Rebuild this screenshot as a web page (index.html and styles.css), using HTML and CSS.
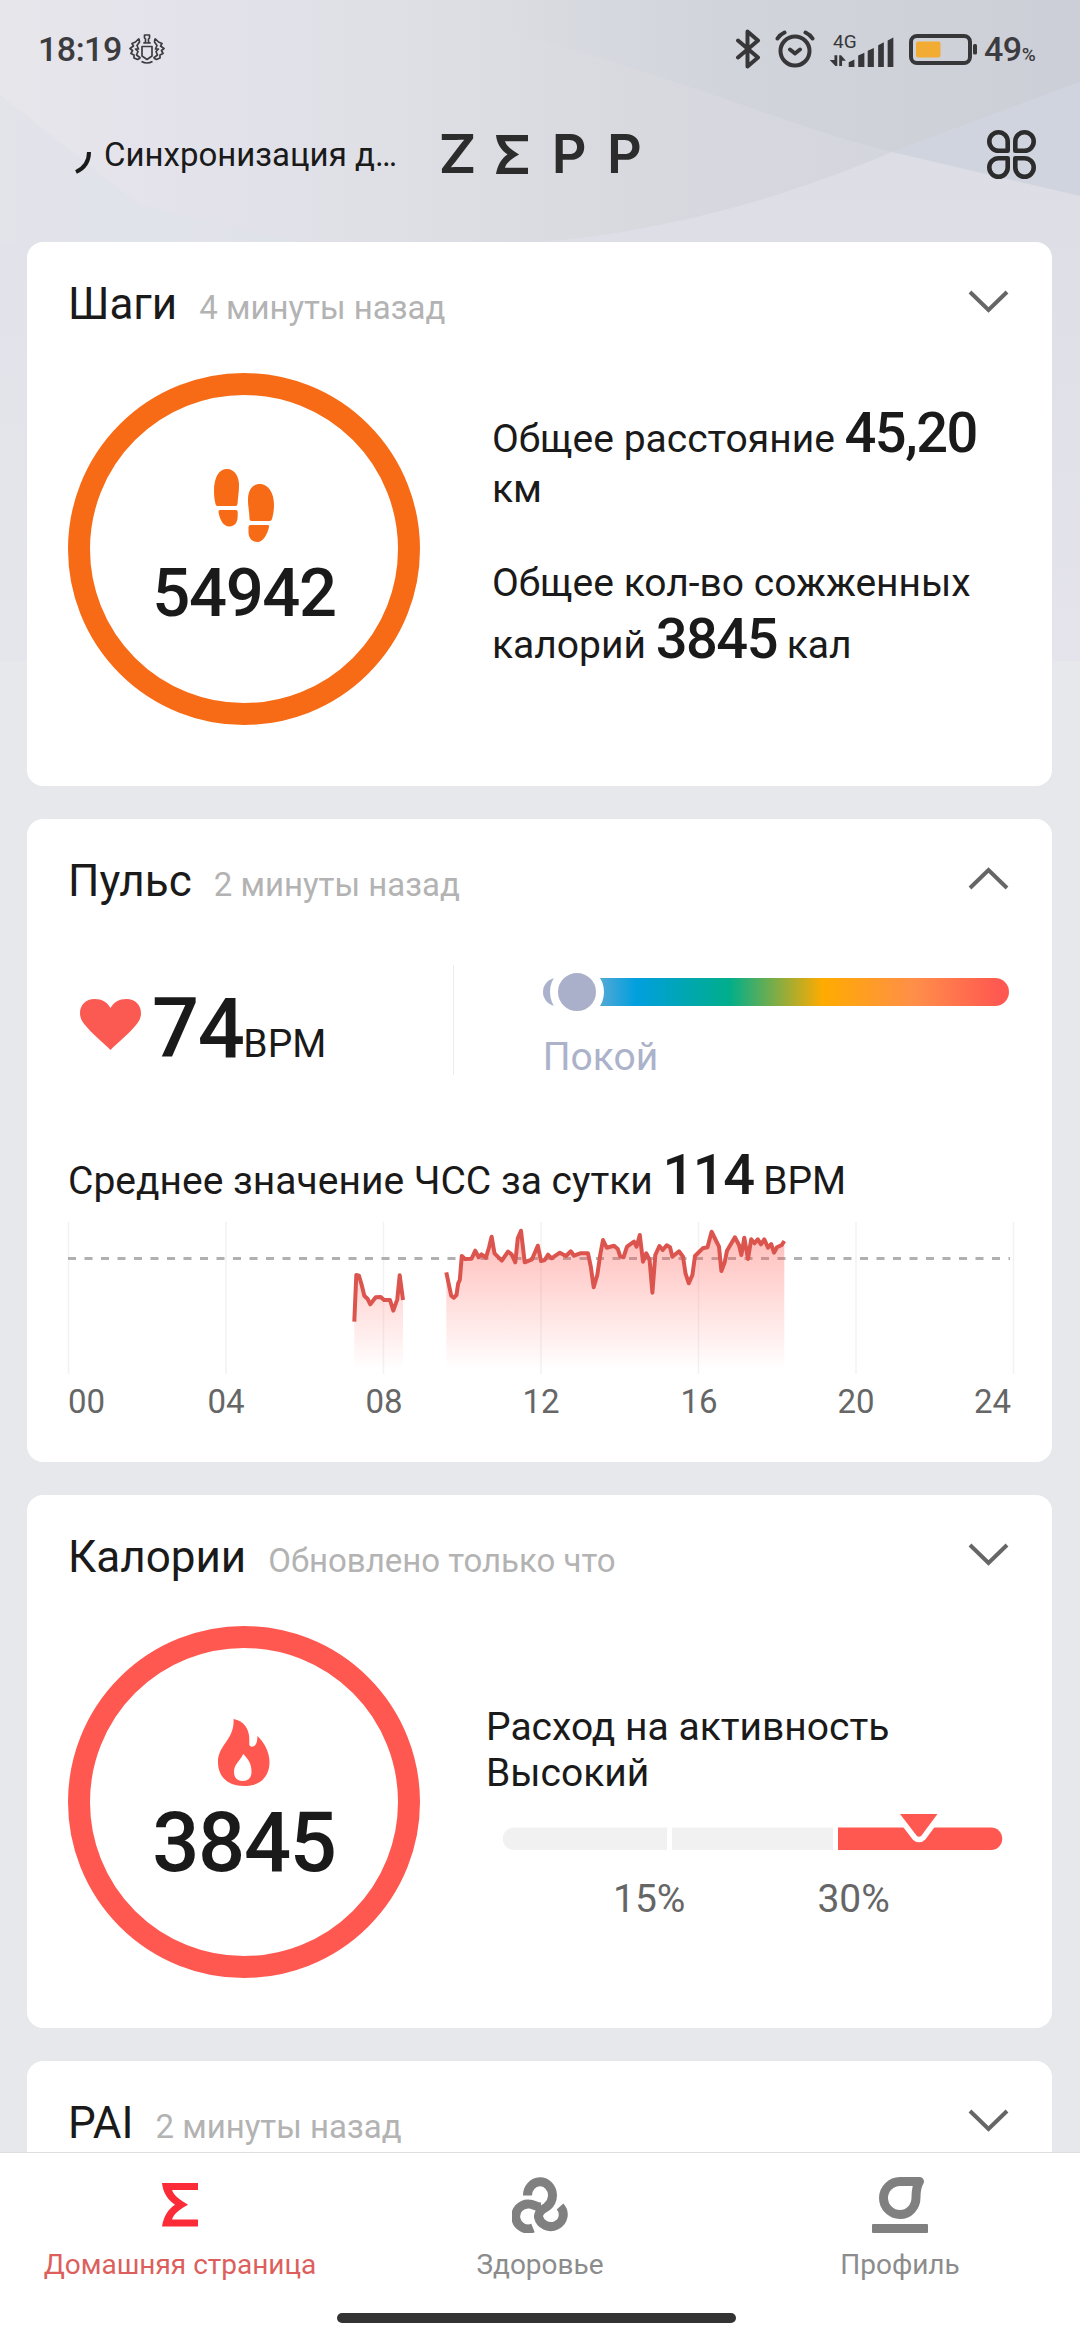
FILE: index.html
```html
<!DOCTYPE html>
<html lang="ru">
<head>
    <meta charset="UTF-8">
    <meta name="viewport" content="width=device-width, initial-scale=1.0">
    <title>Zepp</title>
    <link rel="stylesheet" href="styles.css">
</head>
<body>
    <div class="phone">
        <!-- Background facets -->
        <svg class="backdrop" width="1080" height="661" viewBox="0 0 1080 661" preserveAspectRatio="none">
            <defs>
                <linearGradient id="sky" x1="0" y1="0" x2="1" y2="0">
                    <stop offset="0" stop-color="#e7e6ea"/>
                    <stop offset="0.15" stop-color="#e4e3ec"/>
                    <stop offset="0.35" stop-color="#dfdfe6"/>
                    <stop offset="0.6" stop-color="#d8d9df"/>
                    <stop offset="1" stop-color="#d1d3dd"/>
                </linearGradient>
                <linearGradient id="hill" x1="0" y1="0" x2="0" y2="1">
                    <stop offset="0" stop-color="#dcdde5"/>
                    <stop offset="1" stop-color="#e5e4ec"/>
                </linearGradient>
                <linearGradient id="left" x1="0" y1="0" x2="0" y2="1">
                    <stop offset="0" stop-color="#e2e2ea"/>
                    <stop offset="1" stop-color="#e5e6eb"/>
                </linearGradient>
                <linearGradient id="edge" x1="0" y1="0" x2="1" y2="0">
                    <stop offset="0" stop-color="#d3d8df" stop-opacity="0"/>
                    <stop offset="0.4" stop-color="#d1d4da"/>
                    <stop offset="1" stop-color="#cdcfd8"/>
                </linearGradient>
            </defs>
            <rect width="1080" height="661" fill="url(#sky)"/>
            <path d="M0 95L140 205L300 242H0Z" fill="#e0e3e9" opacity="0.7"/>
            <path d="M500 0H1080V82L892 152C800 130 660 70 500 30Z" fill="url(#edge)"/>
            <path d="M1080 82L892 152L1080 196Z" fill="#d0d4de"/>
            <path d="M1080 196L892 152C780 200 660 232 540 242V661H1080Z" fill="url(#hill)"/>
            <path d="M0 242H540V661H0Z" fill="url(#left)"/>
        </svg>

        <div class="status-bar">
            <span class="clock">18:19</span>
            <svg class="emblem" width="36" height="30" viewBox="0 0 36 30" fill="none" stroke="#3c3c40" stroke-width="1.7" stroke-linejoin="round">
                <path d="M15.500 1H20.500V4L19.500 5V8L21 9H15L16.500 8V5L15.500 4Z"/>
                <path d="M13 12.500H23V22L18 25.500L13 22Z"/>
                <path d="M12.500 27.500Q18 30.500 23.500 27.500"/>
                <path d="M10 4.500L6.500 8L3 9.500L4.500 12L1 14.500L3.500 16.500L2 19.500L5 21V24L8.500 25.500L11.500 24M10 4.500L10.500 8L8 11.500L9.500 15H6.500L9 17.500L7.500 21L11.500 24"/>
                <path d="M26 4.500L29.500 8L33 9.500L31.500 12L35 14.500L32.500 16.500L34 19.500L31 21V24L27.500 25.500L24.500 24M26 4.500L25.500 8L28 11.500L26.500 15H29.500L27 17.500L28.500 21L24.500 24"/>
            </svg>
            <svg class="bluetooth" width="26" height="40" viewBox="0 0 26 40" fill="none" stroke="#37373a" stroke-width="4" stroke-linecap="round" stroke-linejoin="round">
                <path d="M3 11.500L23 28.500L12.500 37.500V2.500L23 11.500L3 28.500"/>
            </svg>
            <svg class="alarm" width="40" height="38" viewBox="0 0 40 38" fill="none" stroke="#37373a" stroke-width="4" stroke-linecap="round" stroke-linejoin="round">
                <circle cx="20" cy="21" r="14.500"/>
                <path d="M15 19.500L20 23.500L25 19.500M2.500 8.500Q5 4.500 9.500 2.500M37.500 8.500Q35 4.500 30.500 2.500"/>
            </svg>
            <svg class="signal" width="68" height="40" viewBox="0 -4 68 40" fill="#37373a">
                <text x="3.500" y="15.500" class="net">4G</text>
                <path d="M5 23.500H8V35H6L0 28.500H5ZM10 35V23.500H12L17 29.500H13V35Z"/>
                <path d="M20 36V31L26 28V36ZM30 36V24L36.500 21V36ZM40 36V19L46.500 16V36ZM51 36V13L57 10V36ZM61 36V8L67 5V36Z"/>
            </svg>
            <svg class="battery" width="69" height="31" viewBox="0 0 69 31">
                <rect x="2" y="2" width="59" height="27" rx="6" fill="none" stroke="#37373a" stroke-width="4"/>
                <rect x="7" y="7.500" width="24.500" height="16" rx="2" fill="#f2ac33"/>
                <rect x="64" y="10" width="4" height="10.500" rx="1.500" fill="#37373a"/>
            </svg>
            <span class="percent">49<small>%</small></span>
        </div>

        <header class="app-bar">
            <div class="sync">
                <svg width="17" height="22" viewBox="0 0 17 22" fill="none" stroke="#1a1a1a" stroke-width="4">
                    <path d="M14 0Q14 14 1 20"/>
                </svg>
                <span>Синхронизация д…</span>
            </div>
            <div class="logo">
                <span class="z">Z</span>
                <svg width="32" height="39" viewBox="0 0 36 43.500" preserveAspectRatio="none" fill="#2c2c2c">
                    <path d="M0 0H36V7H10C12 13 19 17.500 26 21.700C19 25.500 12 30 10 36.500H36V43.500H0C1.500 34 6 26 13 21.700C6 17 1 10 0 0Z"/>
                </svg>
                <span>P</span>
                <span>P</span>
            </div>
            <svg class="menu-icon" width="49" height="49" viewBox="0 0 49 49" fill="none" stroke="#2c2c2c" stroke-width="4.600" stroke-linejoin="round">
                <path d="M20.700 20.700H11.500A9.200 9.200 0 1 1 20.700 11.500Z"/>
                <path d="M28.300 20.700V11.500A9.200 9.200 0 1 1 37.500 20.700Z"/>
                <path d="M20.700 28.300V37.500A9.200 9.200 0 1 1 11.500 28.300Z"/>
                <path d="M28.300 28.300H37.500A9.200 9.200 0 1 1 28.300 37.500Z"/>
            </svg>
        </header>

        <main class="cards">
            <section class="card steps">
                <div class="card-head">
                    <h2>Шаги</h2>
                    <span class="ago">4 минуты назад</span>
                    <svg class="chevron" width="41" height="23" viewBox="0 0 41 23"><path d="M2 2L20.500 20L39 2"/></svg>
                </div>
                <div class="card-body">
                    <div class="ring ring-steps">
                        <svg width="60" height="73" viewBox="0 0 60 73" fill="#f76b16">
                            <path d="M13 0C21 0 25 8 25 16C25 23 24 28 23.500 35Q23.300 37 21.500 37H3.500Q1.800 37 1.500 35C.5 31 0 27 0 22C0 8 5 0 13 0Z"/>
                            <path d="M6 41H22Q23.700 41 23.700 43V47C23.700 54 20 57.500 15.500 57.500C9 57.500 6 51 4.500 43Q4.300 41 6 41Z"/>
                            <path d="M45.500 15C54 15 60 23 60 36C60 42 59 46 58 50Q57.500 52 55.500 52H37.500Q35.500 52 35.500 50C35.500 43 34 38 34 31C34 22 38 15 45.500 15Z"/>
                            <path d="M36.500 56H53.500Q55.500 56 55 58C53 66 49 73 43.500 73C38 73 34.500 69 34.500 63V58Q34.500 56 36.500 56Z"/>
                        </svg>
                        <span>54942</span>
                    </div>
                    <div class="totals">
                        <p>Общее расстояние <b>45,20</b> км</p>
                        <p>Общее кол-во сожженных калорий <b>3845</b> кал</p>
                    </div>
                </div>
            </section>

            <section class="card pulse">
                <div class="card-head">
                    <h2>Пульс</h2>
                    <span class="ago">2 минуты назад</span>
                    <svg class="chevron" width="41" height="23" viewBox="0 0 41 23"><path d="M2 21L20.500 3L39 21"/></svg>
                </div>
                <div class="pulse-row">
                    <div class="bpm">
                        <svg width="61" height="51" viewBox="0 0 61 51" fill="#fb5a52">
                            <path d="M30.500 51C24 44 12 35 5 26C1 21 0 18 0 14C0 6 6 0 14.500 0C22 0 27 3 30.500 9C34 3 39 0 46.500 0C55 0 61 6 61 14C61 18 60 21 56 26C49 35 37 44 30.500 51Z"/>
                        </svg>
                        <b>74</b><span>BPM</span>
                    </div>
                    <div class="zone">
                        <div class="zone-bar"><i class="knob"></i></div>
                        <span>Покой</span>
                    </div>
                </div>
                <p class="average">Среднее значение ЧСС за сутки <b>114</b> BPM</p>
                <svg class="chart" width="948" height="200" viewBox="0 0 948 200">
                    <defs>
                        <linearGradient id="area" gradientUnits="userSpaceOnUse" x1="0" y1="10" x2="0" y2="148">
                            <stop offset="0" stop-color="#ff5850" stop-opacity="0.4"/>
                            <stop offset="1" stop-color="#ff5850" stop-opacity="0"/>
                        </linearGradient>
                    </defs>
                    <path class="grid" d="M.5 0V152M158 0V152M315.500 0V152M473 0V152M630.500 0V152M788 0V152M945.500 0V152"/>
                    <path class="dash" d="M0 36.500H942"/>
                    <g fill="url(#area)">
                        <path d="M286.300 152V99.700L288.300 53L291 53.700L293.700 63L296.300 73.700L299.700 77L302.300 82.300L307.700 75.300L312.700 75L316 78H322L325.300 88.700L329.300 77.300L331.700 53.300L335 78V152Z"/>
                        <path d="M378.300 152V50.300L383.200 73.700L385.700 75.700L388.500 73L390.200 61.300L391.800 58L393.800 34L397 37L403.600 36.700L407.300 28.700L410.600 35.300L413.400 32.300L417.900 35.700L421.200 24.700L423.600 14.700L426.500 31.300L433.800 38.700L440 29.700L443.600 32.300L447.300 40.300L449.800 16.300L453 8.700L456.700 40.300L464 37.300L469.800 23.700L473 39L476.700 38L480 32.700L483.600 36.300L491.800 30.700L497.900 34L502.800 29.300L506 33.700L512.200 31.300H520L522.800 44.700L525.700 65.300L529.300 53L532.200 33L535 18L538.700 25.700L546 23.700L549.800 27L552.200 34.300L555.500 35.300L559 24.700L566 19.700L568.500 24.700L571.800 13L575 39.700L578.300 31.300L581.600 38L584.400 70.700L587.300 33L591.400 24L594.700 28L598.700 23.300L602 25.300L604.400 34.700L611 29.300L615 34.700L617.500 51.300L620.800 61.300L624.400 53L627 34L634.700 26.300L639.500 25.300L643.600 9.700L647.700 18L651 24.700L653.400 49L656.700 40.300L659 28.700L666.900 15.300L671 23L673.400 33L676.300 15.700L680 37L683.200 17.300L686.500 21.300L689.800 17.300L693 22.300L696.300 17.300L700 25.700L703.200 22L706 30.700L709 25.300L713.800 23L716.300 19V152Z"/>
                    </g>
                    <path class="line" d="M286.300 99.700L288.300 53L291 53.700L293.700 63L296.300 73.700L299.700 77L302.300 82.300L307.700 75.300L312.700 75L316 78H322L325.300 88.700L329.300 77.300L331.700 53.300L335 78"/>
                    <path class="line" d="M378.300 50.300L383.200 73.700L385.700 75.700L388.500 73L390.200 61.300L391.800 58L393.800 34L397 37L403.600 36.700L407.300 28.700L410.600 35.300L413.400 32.300L417.900 35.700L421.200 24.700L423.600 14.700L426.500 31.300L433.800 38.700L440 29.700L443.600 32.300L447.300 40.300L449.800 16.300L453 8.700L456.700 40.300L464 37.300L469.800 23.700L473 39L476.700 38L480 32.700L483.600 36.300L491.800 30.700L497.900 34L502.800 29.300L506 33.700L512.200 31.300H520L522.800 44.700L525.700 65.300L529.300 53L532.200 33L535 18L538.700 25.700L546 23.700L549.800 27L552.200 34.300L555.500 35.300L559 24.700L566 19.700L568.500 24.700L571.800 13L575 39.700L578.300 31.300L581.600 38L584.400 70.700L587.300 33L591.400 24L594.700 28L598.700 23.300L602 25.300L604.400 34.700L611 29.300L615 34.700L617.500 51.300L620.800 61.300L624.400 53L627 34L634.700 26.300L639.500 25.300L643.600 9.700L647.700 18L651 24.700L653.400 49L656.700 40.300L659 28.700L666.900 15.300L671 23L673.400 33L676.300 15.700L680 37L683.200 17.300L686.500 21.300L689.800 17.300L693 22.300L696.300 17.300L700 25.700L703.200 22L706 30.700L709 25.300L713.800 23L716.300 19"/>
                    <g class="hours">
                        <text class="first" x="0" y="191">00</text>
                        <text x="158" y="191">04</text>
                        <text x="316" y="191">08</text>
                        <text x="473" y="191">12</text>
                        <text x="631" y="191">16</text>
                        <text x="788" y="191">20</text>
                        <text class="last" x="943" y="191">24</text>
                    </g>
                </svg>
            </section>

            <section class="card calories">
                <div class="card-head">
                    <h2>Калории</h2>
                    <span class="ago">Обновлено только что</span>
                    <svg class="chevron" width="41" height="23" viewBox="0 0 41 23"><path d="M2 2L20.500 20L39 2"/></svg>
                </div>
                <div class="card-body">
                    <div class="ring ring-calories">
                        <svg width="52" height="67" viewBox="0 0 52 67" fill="#ff5850" fill-rule="evenodd">
                            <path d="M15.500 0C26 2 31.300 10 31.300 20V25.500C32 28.500 36 28.500 38 25C39.500 22.500 39 20 39.500 17C46 23 51.500 33 51.500 43C51.500 58 42 67 26 67C10 67 0 58 0 43C0 26 17 20 15.500 0ZM25.200 35C22 42 16 45 16 53C16 59 19.500 62 24.800 62C30 62 33.500 59 33.500 53C33.500 44 30 40 25.200 35Z"/>
                        </svg>
                        <span>3845</span>
                    </div>
                    <div class="activity">
                        <p>Расход на активность<br>Высокий</p>
                        <svg width="499" height="36" viewBox="0 0 499 36">
                            <path d="M11 13.500H164V36H11A11 11 0 0 1 11 13.500ZM169 13.500H330V36H169Z" fill="#f1f1f1"/>
                            <path d="M335 13.500H488A11 11 0 0 1 488 36H335Z" fill="#ff5850"/>
                            <path d="M397 0H434.500L418.500 21.500Q416 24 413.500 21.500Z" fill="#ff5850" stroke="#fff" stroke-width="11" stroke-linejoin="round" paint-order="stroke"/>
                        </svg>
                        <div class="marks"><span>15%</span><span>30%</span></div>
                    </div>
                </div>
            </section>

            <section class="card pai">
                <div class="card-head">
                    <h2>PAI</h2>
                    <span class="ago">2 минуты назад</span>
                    <svg class="chevron" width="41" height="23" viewBox="0 0 41 23"><path d="M2 2L20.500 20L39 2"/></svg>
                </div>
            </section>
        </main>

        <nav class="tabs">
            <a class="tab active">
                <svg width="56" height="56" viewBox="0 0 56 56" fill="#fb2c37">
                    <path transform="translate(10 6)" d="M0 0H36V7H10C12 13 19 17.500 26 21.700C19 25.500 12 30 10 36.500H36V43.500H0C1.500 34 6 26 13 21.700C6 17 1 10 0 0Z"/>
                </svg>
                <span>Домашняя страница</span>
            </a>
            <a class="tab">
                <svg width="56" height="56" viewBox="0 0 56 56" fill="none" stroke="#808080" stroke-width="9">
                    <path d="M15.500 18.500A12.500 13.500 0 0 1 40.500 18C40.500 23 38.500 27 34.500 30C29.500 33 26.500 35 26.500 40A12.500 12 0 1 0 48 29.500"/>
                    <path d="M21 51A12.500 12.500 0 1 1 17 27C22 27 23 30 29 30"/>
                </svg>
                <span>Здоровье</span>
            </a>
            <a class="tab">
                <svg width="56" height="56" viewBox="0 0 56 56">
                    <path d="M28 4.500H47.500C44.500 9 44 14 44 20.500C44 30 37 37.500 28 37.500S11.500 30 11.500 21S19 4.500 28 4.500Z" fill="none" stroke="#808080" stroke-width="9" stroke-linejoin="round"/>
                    <rect y="47" width="56" height="9" rx="1" fill="#808080"/>
                </svg>
                <span>Профиль</span>
            </a>
            <div class="home-bar"></div>
        </nav>
    </div>
</body>
</html>
```
FILE: styles.css
```css
* {
    box-sizing: border-box;
}

body {
    margin: 0;
    font-family: Roboto, 'Noto Sans', sans-serif;
    color: #1a1a1a;
    background: #e7e8ec;
}

svg {
    display: block;
    flex: none;
}

h2, p {
    margin: 0;
    font-weight: 400;
}

b {
    font-weight: 500;
}

.phone {
    position: relative;
    display: flex;
    flex-direction: column;
    width: 1080px;
    height: 2340px;
    overflow: hidden;
}

.backdrop {
    position: absolute;
    top: 0;
    left: 0;
    z-index: -1;
}

/* Status bar */
.status-bar {
    display: flex;
    align-items: center;
    height: 98px;
    padding: 0 41px 0 38px;
    color: #3c3c40;
}

.clock {
    width: 91px;
    font-size: 34px;
    font-weight: 500;
    letter-spacing: -0.5px;
}

.emblem {
    margin-right: auto;
}

.alarm {
    margin-left: 14px;
}

.signal {
    margin: 0 13px;
    padding-bottom: 2px;
    overflow: visible;
}

.net {
    font-size: 20px;
}

.percent {
    width: 55px;
    margin-left: 6px;
    font-size: 34px;
    font-weight: 500;
    letter-spacing: -0.5px;
    white-space: nowrap;
}

.percent small {
    font-size: 19px;
}

/* App bar */
.app-bar {
    display: flex;
    align-items: center;
    height: 112px;
    margin-bottom: 32px;
    padding: 0 44px 0 75px;
}

.sync {
    display: flex;
    align-items: center;
    gap: 12px;
    width: 366px;
    font-size: 33px;
}

.sync svg {
    margin-top: 18px;
}

.logo {
    display: flex;
    align-items: center;
    justify-content: space-between;
    width: 198px;
}

.logo span {
    width: 32px;
    font-family: Inter, sans-serif;
    font-size: 54px;
    font-weight: 600;
    line-height: 54px;
    color: #2c2c2c;
}

.logo .z {
    transform: scaleX(1.08);
    transform-origin: right;
}

.menu-icon {
    margin-left: auto;
}

/* Cards */
.cards {
    display: flex;
    flex: 1;
    flex-direction: column;
    gap: 33px;
    min-height: 0;
    padding: 0 28px 0 27px;
    overflow: hidden;
}

.card {
    flex: none;
    padding: 36px 43px 0 41px;
    background: #fff;
    border-radius: 16px;
}

.steps {
    height: 544px;
}

.pulse {
    height: 643px;
}

.calories {
    height: 533px;
}

.pai {
    height: 300px;
}

.card-head {
    display: flex;
    align-items: baseline;
    height: 52px;
}

.card-head h2 {
    font-size: 44px;
}

.ago {
    margin-left: 22px;
    font-size: 33px;
    color: #b3b3b3;
}

.chevron {
    align-self: flex-start;
    margin: 12px 0 0 auto;
    fill: none;
    stroke: #666;
    stroke-width: 4;
}

.card-body {
    display: flex;
    margin-top: 43px;
}

.ring {
    display: flex;
    flex: none;
    flex-direction: column;
    align-items: center;
    width: 352px;
    height: 352px;
    border: 22px solid;
    border-radius: 50%;
}

.ring span {
    color: #1a1a1a;
    font-weight: 500;
}

.ring-steps {
    padding-top: 74px;
    border-color: #f76b16;
}

.ring-steps span {
    margin-top: 12px;
    font-size: 67px;
    letter-spacing: -1.4px;
}

.ring-calories {
    padding-top: 71px;
    border-color: #ff5850;
}

.ring-calories span {
    margin-top: 8px;
    font-size: 83px;
    letter-spacing: -1.3px;
}

.totals {
    width: 510px;
    margin: 27px 0 0 72px;
    font-size: 39px;
}

.totals p + p {
    margin-top: 48px;
}

.totals b, .average b {
    font-size: 56px;
    letter-spacing: -1.5px;
}

/* Pulse card */
.pulse-row {
    display: flex;
    height: 110px;
    margin-top: 58px;
}

.bpm {
    display: flex;
    align-items: baseline;
    width: 387px;
    padding: 15px 0 0 12px;
    border-right: 1px solid #ececec;
    font-size: 39px;
}

.bpm svg {
    align-self: flex-start;
    margin: 19px 11px 0 0;
}

.bpm b {
    font-size: 83px;
    letter-spacing: -1.5px;
}

.zone {
    width: 468px;
    margin: 13px 0 0 89px;
    font-size: 39px;
    color: #abb2ca;
}

.zone-bar {
    position: relative;
    height: 28px;
    margin-bottom: 28px;
    border-radius: 14px;
    background: linear-gradient(90deg, #abb2cb 4%, #009fde 20%, #00ae8b 40%, #ffab00 60%, #ff8e4a 80%, #ff5850 98%);
}

.knob {
    position: absolute;
    top: -13px;
    left: 7px;
    width: 54px;
    height: 54px;
    border: 8px solid #fff;
    border-radius: 50%;
    background: #abb0ca;
}

.average {
    margin-top: 67px;
    font-size: 39px;
    white-space: nowrap;
}

.chart {
    margin-top: 14px;
    overflow: visible;
}

.grid {
    stroke: #f2f2f2;
    stroke-width: 1.5;
}

.dash {
    stroke: #b0b0b0;
    stroke-width: 3;
    stroke-dasharray: 8 8.5;
}

.line {
    fill: none;
    stroke: #dc544e;
    stroke-width: 4;
    stroke-linejoin: round;
}

.hours {
    font-size: 33px;
    fill: #666;
    text-anchor: middle;
}

.hours .first {
    text-anchor: start;
}

.hours .last {
    text-anchor: end;
}

/* Calories card */
.activity {
    margin: 78px 0 0 66px;
    font-size: 39px;
}

.activity p {
    line-height: 46px;
}

.activity svg {
    margin: 18px 0 26px 17px;
    overflow: visible;
}

.marks {
    display: flex;
    gap: 132px;
    padding-left: 127px;
    color: #666;
}

/* Bottom tabs */
.tabs {
    display: flex;
    flex-wrap: wrap;
    align-content: flex-start;
    justify-content: center;
    height: 188px;
    padding-top: 24px;
    border-top: 1px solid #dedede;
    background: #fff;
}

.tab {
    display: flex;
    flex-direction: column;
    align-items: center;
    gap: 15px;
    width: 360px;
    font-size: 28px;
    color: #8c8c8c;
}

.tab.active {
    color: #dd5f5d;
}

.home-bar {
    width: 399px;
    height: 10px;
    margin: 32px 7px 0 0;
    border-radius: 5px;
    background: #333;
}
```
